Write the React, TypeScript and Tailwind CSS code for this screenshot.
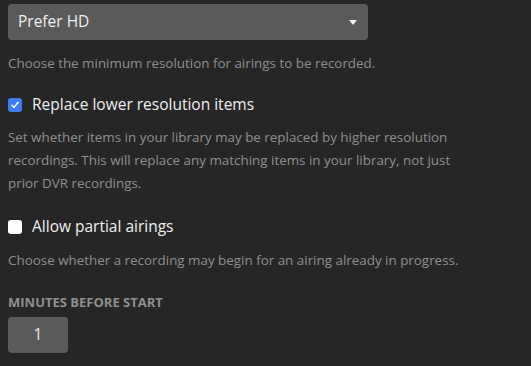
export default function App() {
  return (
    <div
      className="w-[531px] h-[366px] bg-[#262626] px-2 pt-1 overflow-hidden"
      style={{ fontFamily: '"Open Sans", sans-serif' }}
    >
      <div className="w-[360px] h-9 rounded bg-[#5a5a5a] flex items-center justify-between pl-[10px] pr-[11px]">
        <span className="text-[15.5px] text-[#eeeeee]">Prefer HD</span>
        <svg width="8" height="5" viewBox="0 0 8 5">
          <path d="M0 0h8L4 5z" fill="#eeeeee" />
        </svg>
      </div>
      <p className="mt-[12px] text-[13.4px] leading-[23px] text-[#8f8f8f]">
        Choose the minimum resolution for airings to be recorded.
      </p>

      <label className="mt-[18px] flex items-center gap-[10px]">
        <span className="w-[14px] h-[14px] rounded-[3px] bg-[#3a7ef0] flex items-center justify-center">
          <svg width="10" height="10" viewBox="0 0 10 10">
            <path d="M2 5.2l2 2.2L8 2.5" fill="none" stroke="#fff" strokeWidth="1.5" strokeLinecap="round" strokeLinejoin="round" />
          </svg>
        </span>
        <span className="text-[15.5px] text-[#eeeeee]">Replace lower resolution items</span>
      </label>
      <p className="mt-[10px] w-[470px] text-[13.4px] leading-[23px] text-[#8f8f8f]">
        Set whether items in your library may be replaced by higher resolution
        recordings. This will replace any matching items in your library, not just
        prior DVR recordings.
      </p>

      <label className="mt-[20px] flex items-center gap-[10px]">
        <span className="w-[14px] h-[14px] rounded-[3px] bg-white" />
        <span className="text-[15.5px] text-[#eeeeee]">Allow partial airings</span>
      </label>
      <p className="mt-[10px] text-[13.4px] leading-[23px] text-[#8f8f8f]">
        Choose whether a recording may begin for an airing already in progress.
      </p>

      <div className="mt-[21px] text-[13px] font-bold uppercase text-[#8f8f8f]">
        Minutes before start
      </div>
      <div className="mt-[5px] w-[60px] h-9 rounded bg-[#5a5a5a] flex items-center justify-center text-[15.5px] text-[#eeeeee]">
        1
      </div>
    </div>
  );
}
